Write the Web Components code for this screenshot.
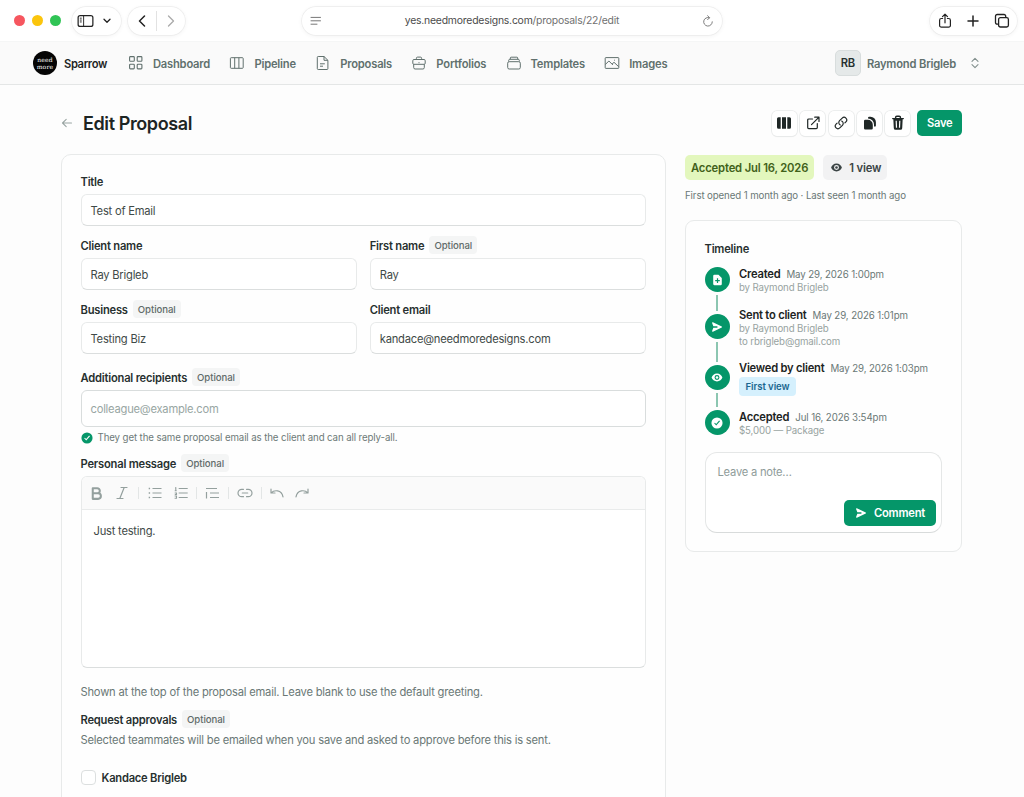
<!DOCTYPE html>
<html lang="en">
<head>
<meta charset="utf-8">
<title>Edit Proposal</title>
<style>
    html, body { margin: 0; height: 797px; overflow: hidden; }
    body {
        background: #fdfdfd;
        color: #27302f;
        font-family: Inter, "Liberation Sans", sans-serif;
        font-size: 11.2px;
        line-height: 16px;
        letter-spacing: -.23px;
    }
</style>
</head>
<body>
<proposal-app></proposal-app>

<script>
const ICONS = {
    sidebar: ['0 0 18 14', '<rect x="1.2" y="1.2" width="15.6" height="11.6" rx="2.2" fill="none" stroke="currentColor" stroke-width="1.3"/><path d="M7 1.2v11.6M3 4h2M3 6h2M3 8h2" fill="none" stroke="currentColor" stroke-width="1"/>'],
    down: ['0 0 8 6', '<path d="M1 1.3l3 3 3-3" fill="none" stroke="currentColor" stroke-width="1.3" stroke-linecap="round" stroke-linejoin="round"/>'],
    back: ['0 0 8 12', '<path d="M6.5 1L1.5 6l5 5" fill="none" stroke="currentColor" stroke-width="1.5" stroke-linecap="round" stroke-linejoin="round"/>'],
    forward: ['0 0 8 12', '<path d="M1.5 1l5 5-5 5" fill="none" stroke="currentColor" stroke-width="1.3" stroke-linecap="round" stroke-linejoin="round"/>'],
    reader: ['0 0 12 10', '<path d="M1 1.4h9.5M1 4.8h9.5M1 8.2h6" fill="none" stroke="currentColor" stroke-width="1" stroke-linecap="round"/>'],
    reload: ['0 0 12 12', '<path d="M7.4 2.7A4.3 4.3 0 1 0 10.3 6.8" fill="none" stroke="currentColor" stroke-width=".95" stroke-linecap="round"/><path d="M5.6 .7l2 2-2 2" fill="none" stroke="currentColor" stroke-width=".95" stroke-linecap="round" stroke-linejoin="round"/>'],
    share: ['0 0 14 16', '<path d="M4.6 5.5H3.4a1.8 1.8 0 0 0-1.8 1.8v5.1a1.8 1.8 0 0 0 1.8 1.8h7.2a1.8 1.8 0 0 0 1.8-1.8V7.3a1.8 1.8 0 0 0-1.8-1.8H9.4M7 9.8V1.3M4.5 3.6L7 1.2l2.5 2.4" fill="none" stroke="currentColor" stroke-width="1.2" stroke-linecap="round" stroke-linejoin="round"/>'],
    plus: ['0 0 12 12', '<path d="M6 1v10M1 6h10" stroke="currentColor" stroke-width="1.5" stroke-linecap="round"/>'],
    tabs: ['0 0 16 16', '<rect x="4.6" y="4.6" width="9.8" height="9.4" rx="1.8" fill="none" stroke="currentColor" stroke-width="1.3"/><path d="M4.4 11.2H3.2a1.7 1.7 0 0 1-1.7-1.7V3.2a1.7 1.7 0 0 1 1.7-1.7h6.8a1.7 1.7 0 0 1 1.7 1.7v1.2" fill="none" stroke="currentColor" stroke-width="1.3"/>'],
    grid: ['0 0 16 16', '<g fill="none" stroke="currentColor" stroke-width="1.1"><rect x="1.6" y="1.6" width="4.7" height="4.7" rx=".8"/><rect x="9.2" y="1.6" width="4.7" height="4.7" rx=".8"/><rect x="1.6" y="9.2" width="4.7" height="4.7" rx=".8"/><rect x="9.2" y="9.2" width="4.7" height="4.7" rx=".8"/></g>'],
    columns: ['0 0 16 16', '<path d="M2.2 2.7h11.2a.8.8 0 0 1 .8.8v9a.8.8 0 0 1-.8.8H2.2a.8.8 0 0 1-.8-.8v-9a.8.8 0 0 1 .8-.8zM5.7 2.7v10.6M9.9 2.7v10.6" fill="none" stroke="currentColor" stroke-width="1"/>'],
    doc: ['0 0 16 16', '<path d="M9 1.5H3.2a.9.9 0 0 0-.9.9v11.2a.9.9 0 0 0 .9.9h8.8a.9.9 0 0 0 .9-.9V5.3zM9 1.5v3.8h3.9M5 8.8h4.8M5 11.2h3" fill="none" stroke="currentColor" stroke-width="1" stroke-linejoin="round"/>'],
    briefcase: ['0 0 16 16', '<path d="M3 4.5h10a1.2 1.2 0 0 1 1.2 1.2v2.6a1 1 0 0 1-1 1H2.8a1 1 0 0 1-1-1V5.7A1.2 1.2 0 0 1 3 4.5zM2.7 9.3v3.3a1.4 1.4 0 0 0 1.4 1.4h7.8a1.4 1.4 0 0 0 1.4-1.4V9.3M5.4 4.5V3.3a1.2 1.2 0 0 1 1.2-1.2h2.8a1.2 1.2 0 0 1 1.2 1.2v1.2M7.5 7.7h1" fill="none" stroke="currentColor" stroke-width="1"/>'],
    stack: ['0 0 16 16', '<rect x="1.7" y="6.7" width="12.6" height="7.3" rx="1.5" fill="none" stroke="currentColor" stroke-width="1"/><path d="M2.7 6.5V5.4a1.1 1.1 0 0 1 1.1-1.1h8.4a1.1 1.1 0 0 1 1.1 1.1v1.1M4.3 4.2V3a.8.8 0 0 1 .8-.8h5.8a.8.8 0 0 1 .8.8v1.2" fill="none" stroke="currentColor" stroke-width="1"/>'],
    image: ['0 0 16 16', '<path d="M1.8 2.6h12.4a.6.6 0 0 1 .6.6v9.6a.6.6 0 0 1-.6.6H1.8a.6.6 0 0 1-.6-.6V3.2a.6.6 0 0 1 .6-.6zM1.3 9.5L4.9 6l4 4M8 9.2l2-1.9 4.7 4.4M10.2 5.2h.8" fill="none" stroke="currentColor" stroke-width="1"/>'],
    updown: ['0 0 10 12', '<path d="M2 4.3L5 1.4l3 2.9M2 7.7l3 2.9 3-2.9" fill="none" stroke="currentColor" stroke-width="1.1" stroke-linecap="round" stroke-linejoin="round"/>'],
    left: ['0 0 12 10', '<path d="M10.5 5H1.5M5.2 1.3L1.5 5l3.7 3.7" fill="none" stroke="currentColor" stroke-width="1.1" stroke-linecap="round" stroke-linejoin="round"/>'],
    bars: ['0 0 16 14', '<path d="M2.5 1.2h2.2v11.6H2.5A1.5 1.5 0 0 1 1 11.3V2.7a1.5 1.5 0 0 1 1.5-1.5zM6 1.2h4v11.6H6zM11.3 1.2h2.2A1.5 1.5 0 0 1 15 2.7v8.6a1.5 1.5 0 0 1-1.5 1.5h-2.2z" fill="currentColor"/>'],
    external: ['0 0 14 14', '<path d="M6.5 3H2.7a1 1 0 0 0-1 1v7.6a1 1 0 0 0 1 1h7.6a1 1 0 0 0 1-1V7.5M8.7 1.2H13v4.3M12.8 1.4L5.5 8.7" fill="none" stroke="currentColor" stroke-width="1.2" stroke-linecap="round" stroke-linejoin="round"/>'],
    link: ['0 0 24 24', '<path d="M13.19 8.688a4.5 4.5 0 0 1 1.242 7.244l-4.5 4.5a4.5 4.5 0 0 1-6.364-6.364l1.757-1.757m13.35-.622 1.757-1.757a4.5 4.5 0 0 0-6.364-6.364l-4.5 4.5a4.5 4.5 0 0 0 1.242 7.244" fill="none" stroke="currentColor" stroke-width="2" stroke-linecap="round" stroke-linejoin="round"/>'],
    copy: ['0 0 14 14', '<path d="M2.2 3.7h2.6a5 5 0 0 1 5 5v3.5a1.2 1.2 0 0 1-1.2 1.2H2.2A1.2 1.2 0 0 1 1 12.2V4.9a1.2 1.2 0 0 1 1.2-1.2zM5 2.5V1.9A1.2 1.2 0 0 1 6.2.7h1.3a5.4 5.4 0 0 1 5.4 5.4v3.3a1.2 1.2 0 0 1-1.2 1.2h-.7V8.5a6 6 0 0 0-6-6z" fill="currentColor"/>'],
    trash: ['0 0 14 16', '<path d="M4.6 3V2.4a1.2 1.2 0 0 1 1.2-1.2h2.4a1.2 1.2 0 0 1 1.2 1.2V3M1.7 3.6h10.6" fill="none" stroke="currentColor" stroke-width="1.4" stroke-linecap="round"/><path fill-rule="evenodd" d="M2.3 3.5h9.4l-.5 9.8a1.6 1.6 0 0 1-1.6 1.5H4.4a1.6 1.6 0 0 1-1.6-1.5zM4.6 5.8l.3 7h1.2l-.3-7zM8.2 5.8l-.3 7h1.2l.3-7z" fill="currentColor"/>'],
    eye: ['0 0 16 12', '<path fill-rule="evenodd" d="M8 .8c3.6 0 6.2 2.4 7.2 5.2-1 2.8-3.6 5.2-7.2 5.2S1.8 8.8.8 6C1.8 3.2 4.4.8 8 .8zm0 1.9a3.3 3.3 0 1 0 0 6.6 3.3 3.3 0 0 0 0-6.6z" fill="currentColor"/><circle cx="8" cy="6" r="1.7" fill="currentColor"/>'],
    docplus: ['0 0 12 14', '<path fill-rule="evenodd" d="M2.3 1h4.9L11 4.6v7A1.4 1.4 0 0 1 9.6 13H2.3A1.3 1.3 0 0 1 1 11.7V2.3A1.3 1.3 0 0 1 2.3 1zM5.3 5v2H3.3v1.4h2v2h1.4v-2h2V7h-2V5z" fill="currentColor"/>'],
    send: ['0 0 14 12', '<path d="M1.1 1.1C1 .5 1.5.2 2.1.4l10.6 5c.5.3.5.9 0 1.2l-10.6 5c-.6.2-1.1-.1-1-.7L2.6 7h4.9V5H2.6z" fill="currentColor"/>'],
    check: ['0 0 14 14', '<path fill-rule="evenodd" d="M7 .5a6.5 6.5 0 1 1 0 13 6.5 6.5 0 0 1 0-13zM3.7 7.4l2.4 2.5L10.5 5l-1-.8-3.5 3.9-1.4-1.5z" fill="currentColor"/>'],
    bold: ['0 0 12 14', '<path d="M2.5 2h4.2a2.4 2.4 0 0 1 0 4.8H2.5zM2.5 6.8h5a2.6 2.6 0 0 1 0 5.2h-5z" fill="none" stroke="currentColor" stroke-width="1.9" stroke-linejoin="round"/>'],
    italic: ['0 0 12 14', '<path d="M5 1.5h6M1 12.5h6M8.2 1.5l-4.4 11" fill="none" stroke="currentColor" stroke-width="1.2" stroke-linecap="round"/>'],
    bullets: ['0 0 14 12', '<path d="M4.5 1.5h9M4.5 6h9M4.5 10.5h9" fill="none" stroke="currentColor" stroke-width="1.2"/><path d="M.7 1.5h1.4M.7 6h1.4M.7 10.5h1.4" fill="none" stroke="currentColor" stroke-width="1.4"/>'],
    numbers: ['0 0 14 12', '<path d="M4.7 1.5h9M4.7 6h9M4.7 10.5h9M1 .8h.8v3M.7 3.8h2M.7 6h1.8v1.5H.8M.6 9h1.9v2.3H.6" fill="none" stroke="currentColor" stroke-width="1.1"/>'],
    quote: ['0 0 15 12', '<path d="M1 1.5h11M5 6h9M5 10.5h9M1.5 5v6.5" fill="none" stroke="currentColor" stroke-width="1.2"/>'],
    chain: ['0 0 16 10', '<path d="M6.5 1.3H4.7a3.7 3.7 0 0 0 0 7.4h1.8M9.5 1.3h1.8a3.7 3.7 0 0 1 0 7.4H9.5M5.3 5h5.4" fill="none" stroke="currentColor" stroke-width="1.2" stroke-linecap="round"/>'],
    undo: ['0 0 14 10', '<path d="M1 1v4h4M1.2 4.9C4 1.8 11.5 1.3 13 8.8" fill="none" stroke="currentColor" stroke-width="1.2" stroke-linecap="round" stroke-linejoin="round"/>'],
    redo: ['0 0 14 10', '<path d="M13 1v4H9M12.8 4.9C10 1.8 2.5 1.3 1 8.8" fill="none" stroke="currentColor" stroke-width="1.2" stroke-linecap="round" stroke-linejoin="round"/>']
};

// Attaches an open shadow root and fills it from a template string
class BaseElement extends HTMLElement {
    constructor() {
        super();
        this.attachShadow({ mode: 'open' });
    }

    connectedCallback() {
        const template = document.createElement('template');
        template.innerHTML = `<style>* { box-sizing: border-box; } ${this.styles()}</style>${this.markup()}`;
        this.shadowRoot.replaceChildren(template.content.cloneNode(true));
    }

    attr(name, fallback = '') {
        return this.getAttribute(name) || fallback;
    }
}

class SpIcon extends BaseElement {
    styles() {
        return `
            :host { display: block; flex: none; width: ${this.attr('w', '16')}px; height: ${this.attr('h', '16')}px; }
            svg { display: block; width: 100%; height: 100%; }
        `;
    }
    markup() {
        const [box, body] = ICONS[this.attr('name')];
        return `<svg viewBox="${box}" aria-hidden="true">${body}</svg>`;
    }
}

class BrowserBar extends BaseElement {
    styles() {
        return `
            :host { display: flex; align-items: center; height: 41px; padding: 0 7px 0 14px; background: #fff; color: #222; box-sizing: border-box; }
            .lights { display: flex; gap: 7px; margin-right: 11px; }
            .lights i { width: 11px; height: 11px; border-radius: 50%; background: #f6565f; }
            .lights i:nth-child(2) { background: #fbc50d; }
            .lights i:nth-child(3) { background: #30c455; }
            .pill { display: flex; flex: none; align-items: center; height: 28px; border-radius: 14px; background: #fff; box-shadow: 0 0 0 .7px #ececec, 0 1px 5px rgba(0, 0, 0, .06); }
            .side { width: 49px; padding-left: 5px; gap: 9px; margin-right: 7px; }
            .history { width: 57px; padding: 0 10px; justify-content: space-between; }
            .history i { width: 1px; height: 20px; background: #e2e2e2; }
            .address { width: 420px; margin-left: 117px; padding: 0 8px; justify-content: space-between; color: #777; }
            .url { color: #4b4b4b; font-size: 10.4px; letter-spacing: -.21px; }
            .url span { color: #707070; }
            .tools { width: 87px; margin-left: auto; padding: 0 7px 0 8px; justify-content: space-between; }
        `;
    }
    markup() {
        return `
            <div class="lights"><i></i><i></i><i></i></div>
            <div class="pill side"><sp-icon name="sidebar" w="17" h="14"></sp-icon><sp-icon name="down" w="8" h="6"></sp-icon></div>
            <div class="pill history">
                <sp-icon name="back" w="8" h="12"></sp-icon><i></i><sp-icon name="forward" w="8" h="12" style="color:#aaa"></sp-icon>
            </div>
            <div class="pill address">
                <sp-icon name="reader" w="12" h="10"></sp-icon>
                <div class="url">yes.needmoredesigns.com<span>/proposals/22/edit</span></div>
                <sp-icon name="reload" w="12" h="12"></sp-icon>
            </div>
            <div class="pill tools">
                <sp-icon name="share" w="14" h="16"></sp-icon>
                <sp-icon name="plus" w="12" h="12"></sp-icon>
                <sp-icon name="tabs" w="16" h="16"></sp-icon>
            </div>
        `;
    }
}

class NavItem extends BaseElement {
    styles() {
        return `
            :host { display: flex; align-items: center; gap: 9px; color: #60706d; font-weight: 560; letter-spacing: -.2px; white-space: nowrap; }
            span { padding-top: 1px; }
        `;
    }
    markup() {
        return `<sp-icon name="${this.attr('icon')}" w="16" h="16"></sp-icon><span><slot></slot></span>`;
    }
}

class NavBar extends BaseElement {
    styles() {
        return `
            :host { display: flex; align-items: center; height: 44px; padding: 0 44px 0 33px; background: #fafafa; border-top: 1px solid #f5f6f6; border-bottom: 1px solid #e4e6e6; box-sizing: border-box; }
            .logo { width: 24px; height: 24px; border-radius: 50%; background: #050505; color: #fff; display: flex; flex-direction: column; align-items: center; justify-content: center; font: 6px/7px "DejaVu Serif", serif; letter-spacing: .2px; padding-bottom: 1px; }
            .brand { margin: 0 21px 0 7px; padding-top: 1px; color: #1d2524; font-weight: 600; letter-spacing: -.38px; }
            nav { display: flex; gap: 19.3px; }
            .user { display: flex; align-items: center; margin-left: auto; color: #60706d; font-weight: 560; letter-spacing: -.19px; }
            .avatar { width: 26px; height: 26px; border: 1px solid #d8dddd; border-radius: 5px; background: #e5e9e9; color: #27302f; display: grid; place-items: center; margin-right: 6px; font-weight: 600; letter-spacing: -.3px; }
            .user span { padding-top: 1px; }
            .user sp-icon { margin-left: 14px; color: #83908e; }
        `;
    }
    markup() {
        return `
            <div class="logo"><span>need</span><span>more</span></div>
            <div class="brand">Sparrow</div>
            <nav>
                <nav-item icon="grid">Dashboard</nav-item>
                <nav-item icon="columns">Pipeline</nav-item>
                <nav-item icon="doc">Proposals</nav-item>
                <nav-item icon="briefcase">Portfolios</nav-item>
                <nav-item icon="stack">Templates</nav-item>
                <nav-item icon="image">Images</nav-item>
            </nav>
            <div class="user"><div class="avatar">RB</div><span>Raymond Brigleb</span><sp-icon name="updown" w="10" h="12"></sp-icon></div>
        `;
    }
}

class ToolButton extends BaseElement {
    styles() {
        return `
            :host { display: grid; place-items: center; width: 25px; height: 25px; border-radius: 5px; background: #fff; color: #1f2726; box-shadow: 0 0 0 .8px #e8eaea, 0 1px 1px rgba(0, 0, 0, .08); }
        `;
    }
    markup() {
        return `<sp-icon name="${this.attr('icon')}" w="${this.attr('w', '14')}" h="${this.attr('h', '14')}"></sp-icon>`;
    }
}

class SolidButton extends BaseElement {
    styles() {
        return `
            :host { display: flex; align-items: center; justify-content: center; gap: 7px; height: 26px; padding: 0 9.5px; box-sizing: border-box; border-radius: 5px; background: #059669; color: #fff; font-weight: 600; white-space: nowrap; }
        `;
    }
    markup() {
        return '<slot></slot>';
    }
}

class TagBadge extends BaseElement {
    styles() {
        return `
            :host { display: inline-flex; align-items: center; height: 18px; padding: 1px 5px 0; box-sizing: border-box; border-radius: 4px; background: #f4f5f5; color: #5f6b69; font-size: 9.6px; font-weight: 500; letter-spacing: -.07px; white-space: nowrap; }
            :host([tone="lime"]) { height: 25px; padding: 0 6px; border-radius: 5px; background: #e3f7bd; color: #41611a; font-size: 11.25px; font-weight: 560; letter-spacing: -.17px; }
            :host([tone="gray"]) { height: 25px; padding: 0 6px 0 7px; gap: 6px; border-radius: 5px; background: #f2f2f3; color: #3b4445; font-size: 11.25px; font-weight: 560; letter-spacing: -.15px; }
            :host([tone="sky"]) { height: 19px; padding: 0 6.5px; background: #d5f0fd; color: #1b6790; font-weight: 560; }
        `;
    }
    markup() {
        return '<slot></slot>';
    }
}

class FormField extends BaseElement {
    styles() {
        return `
            :host { display: block; }
            .label { display: flex; align-items: center; gap: 5px; height: 18px; margin-bottom: 4px; color: #27302f; font-weight: 560; letter-spacing: -.22px; }
            .label span { padding-top: 1px; }
        `;
    }
    markup() {
        const badge = this.hasAttribute('optional') ? '<tag-badge>Optional</tag-badge>' : '';
        return `<div class="label"><span>${this.attr('label')}</span>${badge}</div><slot></slot>`;
    }
}

class TextInput extends BaseElement {
    styles() {
        return `
            :host { display: flex; align-items: center; height: var(--input-height, 32px); padding: 0 9px; box-sizing: border-box; border: 1px solid #e8eaea; border-bottom-color: #dbdede; border-radius: 6px; background: #fff; color: #3f4a48; }
            :host([placeholder]) { color: #98a6a3; border-color: #d9dddd; }
            span { padding-top: 1px; }
        `;
    }
    markup() {
        return `<span>${this.attr('placeholder', this.attr('value'))}</span>`;
    }
}

class RichEditor extends BaseElement {
    styles() {
        return `
            :host { display: flex; flex-direction: column; height: 192px; box-sizing: border-box; border: 1px solid #e8eaea; border-bottom-color: #dbdede; border-radius: 6px; background: #fff; overflow: hidden; }
            .bar { display: flex; align-items: center; height: 33px; padding: 0 8.5px; background: #fafafa; border-bottom: 1px solid #e9ebeb; color: #94a09e; }
            .bar i { width: 1px; height: 12px; background: #e3e6e6; }
            .body { padding: 13px 12px; color: #3f4a48; }
        `;
    }
    markup() {
        return `
            <div class="bar">
                <sp-icon name="bold" w="13" h="15"></sp-icon>
                <sp-icon name="italic" w="12" h="14" style="margin:0 10px 0 13px"></sp-icon>
                <i></i>
                <sp-icon name="bullets" w="14" h="12" style="margin:0 12px 0 9px"></sp-icon>
                <sp-icon name="numbers" w="14" h="12" style="margin-right:8px"></sp-icon>
                <i></i>
                <sp-icon name="quote" w="15" h="12" style="margin:0 8px"></sp-icon>
                <i></i>
                <sp-icon name="chain" w="16" h="10" style="margin:0 8px"></sp-icon>
                <i></i>
                <sp-icon name="undo" w="14" h="10" style="margin:0 11px 0 8px"></sp-icon>
                <sp-icon name="redo" w="14" h="10"></sp-icon>
            </div>
            <div class="body"><slot></slot></div>
        `;
    }
}

class ProposalForm extends BaseElement {
    styles() {
        return `
            :host { display: block; height: 680px; box-sizing: border-box; padding: 17px 19px 17px 18.5px; border: 1px solid #e8eaea; border-radius: 10px; background: #fefefe; }
            .grid { display: grid; grid-template-columns: 1fr 1fr; gap: 10px 13px; }
            .wide { grid-column: span 2; }
            .recipients { display: block; margin-top: 14px; --input-height: 37px; }
            .note { display: flex; align-items: center; gap: 5px; height: 16px; margin: 3px 0 8px; color: #6d7a78; font-size: 9.7px; letter-spacing: -.11px; }
            .note sp-icon { color: #059669; }
            .help { margin: 0; color: #6a7876; letter-spacing: -.21px; }
            .check { display: flex; align-items: center; gap: 6px; margin-top: 21px; color: #27302f; font-weight: 560; letter-spacing: -.24px; }
            .check i { width: 15px; height: 15px; border: 1px solid #dcdfdf; border-radius: 4px; background: #fff; }
            .check span { padding-top: 1px; }
        `;
    }
    markup() {
        return `
            <div class="grid">
                <form-field class="wide" label="Title"><text-input value="Test of Email"></text-input></form-field>
                <form-field label="Client name"><text-input value="Ray Brigleb"></text-input></form-field>
                <form-field label="First name" optional><text-input value="Ray"></text-input></form-field>
                <form-field label="Business" optional><text-input value="Testing Biz"></text-input></form-field>
                <form-field label="Client email"><text-input value="kandace@needmoredesigns.com"></text-input></form-field>
            </div>
            <form-field class="recipients" label="Additional recipients" optional>
                <text-input placeholder="colleague@example.com"></text-input>
            </form-field>
            <div class="note"><sp-icon name="check" w="12" h="12"></sp-icon><span>They get the same proposal email as the client and can all reply-all.</span></div>
            <form-field label="Personal message" optional><rich-editor>Just testing.</rich-editor></form-field>
            <p class="help" style="margin-top:16px">Shown at the top of the proposal email. Leave blank to use the default greeting.</p>
            <form-field label="Request approvals" optional style="margin-top:10px"></form-field>
            <p class="help">Selected teammates will be emailed when you save and asked to approve before this is sent.</p>
            <div class="check"><i></i><span>Kandace Brigleb</span></div>
        `;
    }
}

class TimelineItem extends BaseElement {
    styles() {
        return `
            :host { display: flex; gap: 9.5px; height: ${this.attr('height')}px; }
            .rail { display: flex; flex-direction: column; align-items: center; gap: 3px; padding-bottom: 3px; width: 25px; }
            .dot { flex: none; display: grid; place-items: center; width: 25px; height: 25px; border-radius: 50%; background: #059669; color: #fff; }
            .line { flex: 1; width: 1.5px; background: #8cc6b1; }
            :host([last]) .line { display: none; }
            .text { margin-top: ${this.attr('lead', '0')}px; white-space: nowrap; }
            .head { display: flex; align-items: baseline; gap: 6px; height: 14px; line-height: 14px; }
            .head b { color: #1b2322; font-weight: 600; }
            .head span { color: #6a7876; font-size: 9.7px; letter-spacing: -.1px; }
            .sub { color: #98a3a1; font-size: 9.7px; line-height: 13px; letter-spacing: -.13px; }
            ::slotted(tag-badge) { margin-top: 2px; }
        `;
    }
    markup() {
        return `
            <div class="rail"><div class="dot"><sp-icon name="${this.attr('icon')}" w="${this.attr('w', '11')}" h="${this.attr('h', '11')}"></sp-icon></div><div class="line"></div></div>
            <div class="text"><div class="head"><b>${this.attr('label')}</b><span>${this.attr('when')}</span></div><div class="sub"><slot></slot></div></div>
        `;
    }
}

class TimelineCard extends BaseElement {
    styles() {
        return `
            :host { display: block; height: 332px; box-sizing: border-box; padding: 20px 19px 19px 18.5px; border: 1px solid #e8eaea; border-radius: 9px; background: #fefefe; }
            h2 { margin: 0 0 10px; color: #27302f; font-size: inherit; font-weight: 560; letter-spacing: -.22px; }
            .note { display: flex; flex-direction: column; justify-content: space-between; height: 81px; margin-top: 17px; padding: 11px 5.5px 6px 12px; border: 1px solid #e5e7e7; border-bottom-color: #d8dbdb; border-radius: 12px; background: #fff; color: #8f9c9a; }
            .note solid-button { align-self: flex-end; padding: 0 10.5px; }
        `;
    }
    markup() {
        return `
            <h2>Timeline</h2>
            <timeline-item icon="docplus" w="11" h="12" height="47" label="Created" when="May 29, 2026 1:00pm">by Raymond Brigleb</timeline-item>
            <timeline-item icon="send" w="12" h="10" height="51" lead="-6" label="Sent to client" when="May 29, 2026 1:01pm">by Raymond Brigleb<br>to rbrigleb@gmail.com</timeline-item>
            <timeline-item icon="eye" w="12" h="9" height="45" lead="-4" label="Viewed by client" when="May 29, 2026 1:03pm"><tag-badge tone="sky">First view</tag-badge></timeline-item>
            <timeline-item icon="check" w="12" h="12" height="25" last label="Accepted" when="Jul 16, 2026 3:54pm">$5,000 — Package</timeline-item>
            <div class="note"><span>Leave a note…</span><solid-button><sp-icon name="send" w="12" h="10"></sp-icon>Comment</solid-button></div>
        `;
    }
}

class ProposalApp extends BaseElement {
    styles() {
        return `
            :host { display: block; height: 797px; overflow: hidden; }
            header { display: flex; align-items: center; height: 26px; margin: 25px 62px 18px 61px; }
            header > sp-icon { color: #9aa5a3; }
            h1 { margin: 0 auto 0 10px; padding-top: 1px; color: #1d2524; font-size: 18px; line-height: 26px; font-weight: 600; letter-spacing: -.4px; }
            .actions { display: flex; gap: 3.4px; margin-right: 7px; }
            main { display: grid; grid-template-columns: 605px 277px; gap: 19px; margin: 0 62px 0 61px; align-items: start; }
            .status { display: flex; gap: 9px; margin-top: 1px; }
            .seen { margin: 8px 0 16px; color: #6a7876; font-size: 9.7px; letter-spacing: -.11px; }
        `;
    }
    markup() {
        return `
            <browser-bar></browser-bar>
            <nav-bar></nav-bar>
            <header>
                <sp-icon name="left" w="12" h="10"></sp-icon>
                <h1>Edit Proposal</h1>
                <div class="actions">
                    <tool-button icon="bars" w="16"></tool-button>
                    <tool-button icon="external"></tool-button>
                    <tool-button icon="link"></tool-button>
                    <tool-button icon="copy"></tool-button>
                    <tool-button icon="trash" h="16"></tool-button>
                </div>
                <solid-button>Save</solid-button>
            </header>
            <main>
                <proposal-form></proposal-form>
                <aside>
                    <div class="status">
                        <tag-badge tone="lime">Accepted Jul 16, 2026</tag-badge>
                        <tag-badge tone="gray"><sp-icon name="eye" w="13" h="9"></sp-icon>1 view</tag-badge>
                    </div>
                    <div class="seen">First opened 1 month ago · Last seen 1 month ago</div>
                    <timeline-card></timeline-card>
                </aside>
            </main>
        `;
    }
}

customElements.define('sp-icon', SpIcon);
customElements.define('browser-bar', BrowserBar);
customElements.define('nav-item', NavItem);
customElements.define('nav-bar', NavBar);
customElements.define('tool-button', ToolButton);
customElements.define('solid-button', SolidButton);
customElements.define('tag-badge', TagBadge);
customElements.define('form-field', FormField);
customElements.define('text-input', TextInput);
customElements.define('rich-editor', RichEditor);
customElements.define('proposal-form', ProposalForm);
customElements.define('timeline-item', TimelineItem);
customElements.define('timeline-card', TimelineCard);
customElements.define('proposal-app', ProposalApp);
</script>
</body>
</html>
